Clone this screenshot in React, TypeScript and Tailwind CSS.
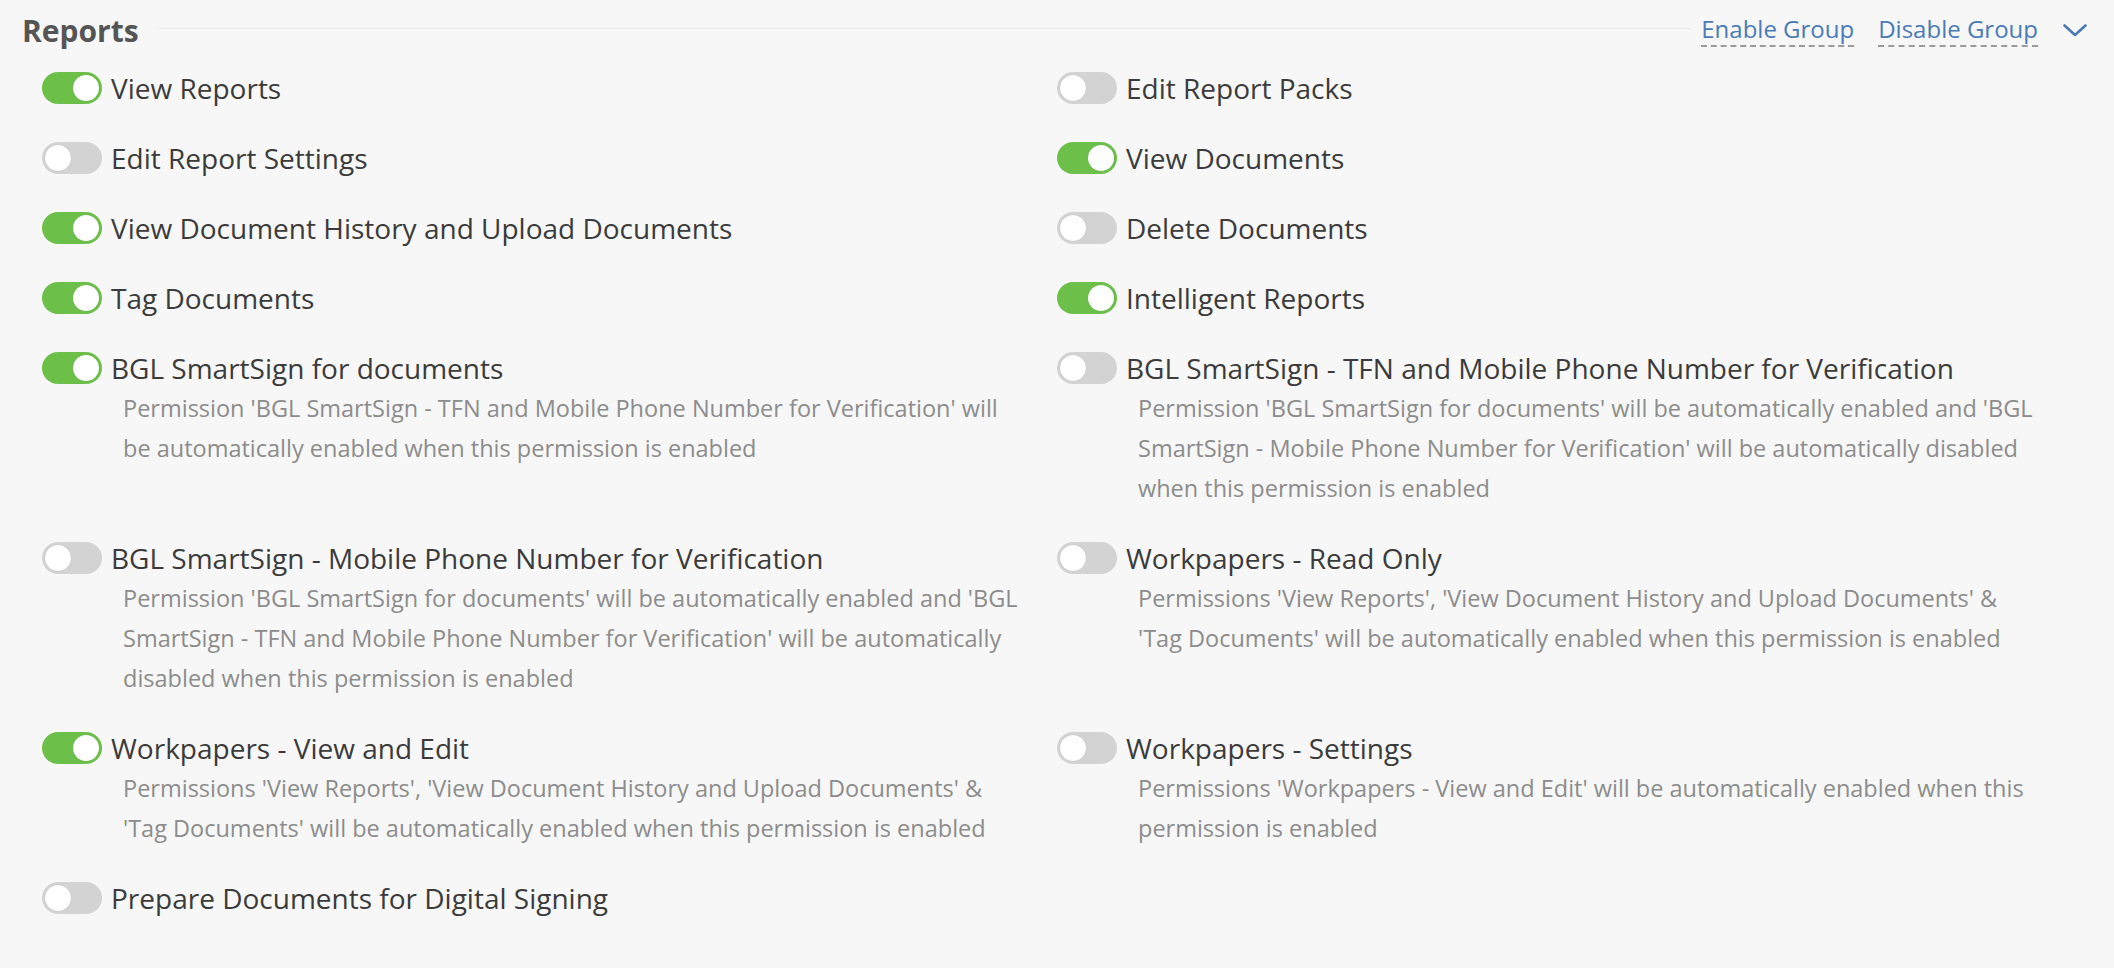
type Perm = {
  label: string
  on: boolean
  note?: string
}

// rows of the grid, two permissions per row
const rows: Perm[][] = [
  [
    { label: 'View Reports', on: true },
    { label: 'Edit Report Packs', on: false },
  ],
  [
    { label: 'Edit Report Settings', on: false },
    { label: 'View Documents', on: true },
  ],
  [
    { label: 'View Document History and Upload Documents', on: true },
    { label: 'Delete Documents', on: false },
  ],
  [
    { label: 'Tag Documents', on: true },
    { label: 'Intelligent Reports', on: true },
  ],
  [
    {
      label: 'BGL SmartSign for documents',
      on: true,
      note: "Permission 'BGL SmartSign - TFN and Mobile Phone Number for Verification' will be automatically enabled when this permission is enabled",
    },
    {
      label: 'BGL SmartSign - TFN and Mobile Phone Number for Verification',
      on: false,
      note: "Permission 'BGL SmartSign for documents' will be automatically enabled and 'BGL SmartSign - Mobile Phone Number for Verification' will be automatically disabled when this permission is enabled",
    },
  ],
  [
    {
      label: 'BGL SmartSign - Mobile Phone Number for Verification',
      on: false,
      note: "Permission 'BGL SmartSign for documents' will be automatically enabled and 'BGL SmartSign - TFN and Mobile Phone Number for Verification' will be automatically disabled when this permission is enabled",
    },
    {
      label: 'Workpapers - Read Only',
      on: false,
      note: "Permissions 'View Reports', 'View Document History and Upload Documents' & 'Tag Documents' will be automatically enabled when this permission is enabled",
    },
  ],
  [
    {
      label: 'Workpapers - View and Edit',
      on: true,
      note: "Permissions 'View Reports', 'View Document History and Upload Documents' & 'Tag Documents' will be automatically enabled when this permission is enabled",
    },
    {
      label: 'Workpapers - Settings',
      on: false,
      note: "Permissions 'Workpapers - View and Edit' will be automatically enabled when this permission is enabled",
    },
  ],
  [{ label: 'Prepare Documents for Digital Signing', on: false }],
]

function Toggle({ on }: { on: boolean }) {
  return (
    <span
      className={`flex h-[32px] w-[60px] shrink-0 items-center rounded-full p-[3px] ${
        on ? 'justify-end bg-[#6cc04a]' : 'justify-start bg-[#d3d3d3]'
      }`}
    >
      <span className="h-[26px] w-[26px] rounded-full bg-white shadow-[0_0_1px_rgba(0,0,0,0.2)]" />
    </span>
  )
}

function PermItem({ perm }: { perm: Perm }) {
  return (
    <div className="flex flex-col">
      <div className="flex h-[40px] items-center gap-[9px]">
        <Toggle on={perm.on} />
        <span className="text-[28px] leading-[40px] text-[#3b3b3b]">{perm.label}</span>
      </div>
      {perm.note && (
        <p className="ml-[81px] pr-[30px] text-[23.5px] leading-[40px] text-[#8c8c8c]">{perm.note}</p>
      )}
    </div>
  )
}

export default function App() {
  return (
    <div className="min-h-[968px] w-full bg-[#f7f7f7] pt-2 font-['Open_Sans',sans-serif]">
      <div className="flex h-11 items-center pl-[22px] pr-[27px]">
        <h2 className="text-[30px] font-bold text-[#555555]">Reports</h2>
        <div className="ml-[20px] mr-[10px] mb-1 h-px flex-1 bg-[#e8e8e8]" />
        <div className="flex items-center gap-[24px] text-[24px] text-[#4a7bb7]">
          <span className="border-b-2 border-dashed border-[#9a9a9a] leading-[32px]">Enable Group</span>
          <span className="border-b-2 border-dashed border-[#9a9a9a] leading-[32px]">Disable Group</span>
          <svg width="24" height="13" viewBox="0 0 24 13" fill="none" className="ml-px">
            <path d="M1.5 1.5 L12 11 L22.5 1.5" stroke="#4a7bb7" strokeWidth="2.6" strokeLinecap="round" strokeLinejoin="round" />
          </svg>
        </div>
      </div>
      <div className="mt-4 grid grid-cols-2 gap-y-[30px] px-[42px] pb-[52px]">
        {rows.map((row, i) =>
          row.map((perm, j) => <PermItem key={`${i}-${j}`} perm={perm} />)
        )}
      </div>
    </div>
  )
}
